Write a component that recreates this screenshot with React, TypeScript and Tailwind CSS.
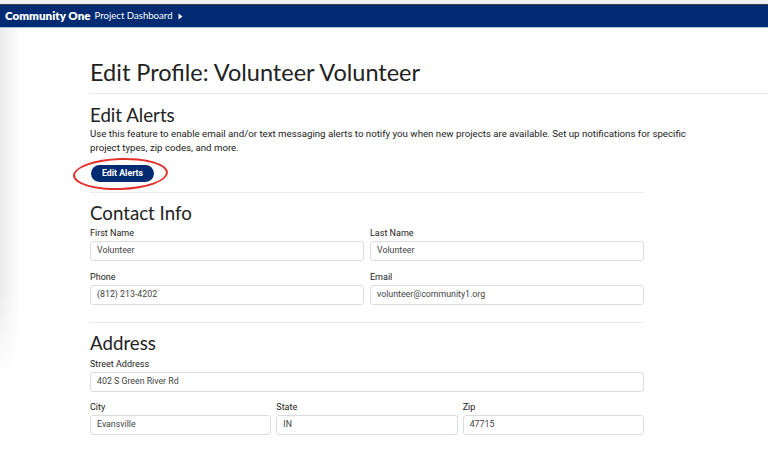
import React from "react";

const heading = { fontFamily: "Lato, 'Noto Sans', sans-serif" };

function Field({ label, value, className = "" }: { label: string; value: string; className?: string }) {
  return (
    <div className={`flex flex-col ${className}`}>
      <label className="text-[9px] leading-[12px] text-[#222] mb-[2px]">{label}</label>
      <div className="h-[20px] rounded-[3px] border border-[#dadde2] px-[6px] flex items-center text-[8.8px] text-[#444]">
        {value}
      </div>
    </div>
  );
}

export default function App() {
  return (
    <div className="w-[768px] h-[452px] bg-white overflow-hidden" style={{ fontFamily: "Roboto, 'Liberation Sans', sans-serif" }}>
      {/* cropped strip above the nav */}
      <div className="h-[5px] bg-[#f2f2f2] border-b border-[#3a3f4a]" />
      <nav className="h-[23px] bg-[#002b72] border-b border-[#a9bfe0] flex items-center px-[5px] text-white">
        <span className="text-[11.6px] font-extrabold" style={heading}>Community One</span>
        <span className="ml-[4px] text-[9.6px]" style={heading}>Project Dashboard</span>
        <svg width="5" height="7" viewBox="0 0 5 7" className="ml-[5px]">
          <path d="M0.5 0.5 L4.5 3.5 L0.5 6.5 Z" fill="white" />
        </svg>
      </nav>

      <div className="flex">
        {/* soft shadow along the left edge */}
        <div className="relative w-[20px] h-[350px] bg-gradient-to-r from-[#ebebeb] to-white shrink-0">
          <div className="absolute bottom-0 left-0 w-full h-[90px] bg-gradient-to-b from-white/0 to-white" />
        </div>
        <main className="flex-1 pl-[70px] pt-[28px]">
          <h1 className="text-[23.5px] leading-[32px] text-[#222]" style={heading}>Edit Profile: Volunteer Volunteer</h1>
          <div className="h-px bg-[#ebebeb] mt-[5px]" />

          <div className="w-[554px]">
            <h2 className="text-[18.7px] leading-[24px] text-[#222] mt-[9px]" style={heading}>Edit Alerts</h2>
            <p className="w-[600px] text-[9.7px] leading-[14px] text-[#222]">
              Use this feature to enable email and/or text messaging alerts to notify you when new projects are available. Set up notifications for specific project types, zip codes, and more.
            </p>
            <div className="mt-[10px] ml-[1px] relative flex w-fit">
              <button className="h-[17px] w-[63px] rounded-full bg-[#002b72] text-white text-[8.8px] leading-none font-bold">
                Edit Alerts
              </button>
              <div className="absolute left-[-18px] top-[-7px] w-[95px] h-[32px] rounded-[50%] border-2 border-[#e2302d] -rotate-2" />
            </div>
            <div className="h-px bg-[#ebebeb] mt-[10px]" />

            <h2 className="text-[18.7px] leading-[24px] text-[#222] mt-[8px]" style={heading}>Contact Info</h2>
            <div className="grid grid-cols-2 gap-x-[6px] gap-y-[10px] mt-[2px]">
              <Field label="First Name" value="Volunteer" />
              <Field label="Last Name" value="Volunteer" />
              <Field label="Phone" value="(812) 213-4202" />
              <Field label="Email" value="volunteer@community1.org" />
            </div>
            <div className="h-px bg-[#ebebeb] mt-[17px]" />

            <h2 className="text-[18.7px] leading-[24px] text-[#222] mt-[8px]" style={heading}>Address</h2>
            <Field label="Street Address" value="402 S Green River Rd" className="mt-[3px]" />
            <div className="grid grid-cols-3 gap-x-[5px] mt-[9px]">
              <Field label="City" value="Evansville" />
              <Field label="State" value="IN" />
              <Field label="Zip" value="47715" />
            </div>
          </div>
        </main>
      </div>
    </div>
  );
}
